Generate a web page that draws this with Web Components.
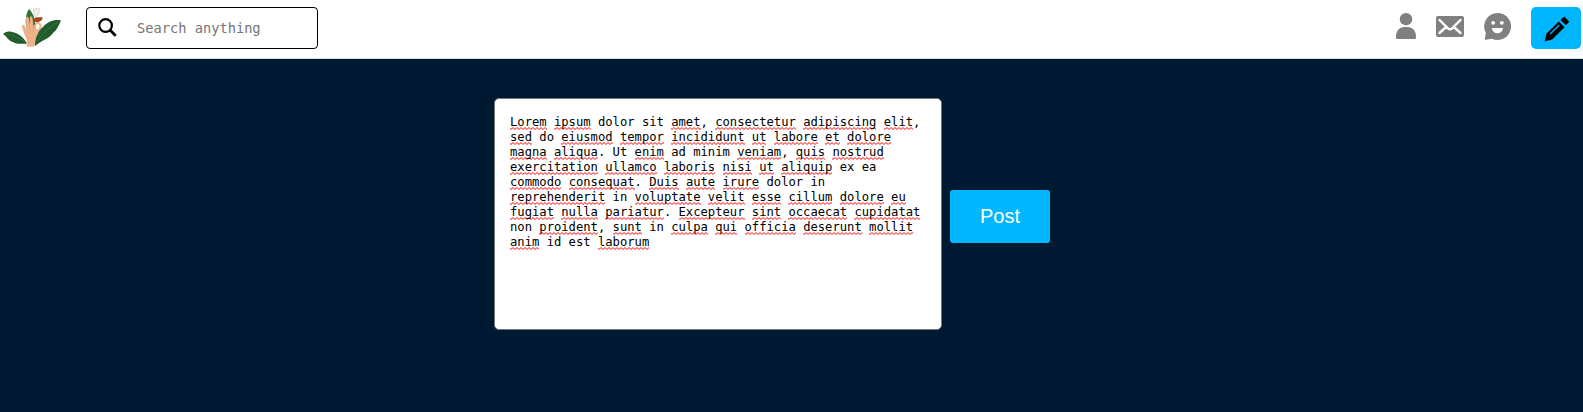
<!DOCTYPE html>
<html lang="en"><head><meta charset="utf-8"><title>Home</title>
<style>html,body{margin:0;height:100%;background:#001933}</style></head><body>
<app-page></app-page>
<script>
const define=(name,html)=>customElements.define(name,class extends HTMLElement{
  constructor(){super();this.attachShadow({mode:'open'}).innerHTML=html;}
});

define('site-logo',`<style>:host{display:block;width:61px;height:40px}svg{display:block}</style>
<svg width="61" height="40" viewBox="3 8 61 40">
<path d="M27 44 C24 37 18 33 12 32 C8 31 5 32 3 34 C7 36 8 41 13 42 C18 45 23 43 27 44Z" fill="#235c2c"/>
<path d="M35 46 C34 36 38 30 43 27 C48 21 55 19 61 20.500 C59 25 57 30 53 33 C49 39 42 40 35 46Z" fill="#235c2c"/>
<path d="M26 26 C25 17 27 12 29 9 C34 14 36 21 35.500 31 L28 30Z" fill="#34703a"/>
<path d="M6 34 C13 35 19 38 26 42 M36 43 C42 34 50 26 59 22" fill="none" stroke="#3b7a42" stroke-width=".7"/>
<path d="M33 9 L35 8 36 10 37 8 40 9 38.500 15 35 17Z" fill="#f4eeee" stroke="#d3c6c6" stroke-width=".6"/>
<path d="M34 18.500 C37 16 39 18 42.500 17 C43 20 40 22 37 22.500 L34 21Z" fill="#a5461e"/>
<path d="M27 46.800 L26.500 39 C24.500 35 23.500 31 21.800 26.500 Q21.800 24.200 24 25 L26.300 28.500 26 18 Q27.300 15.500 28.700 18 L29.500 25 30 17 Q31.700 15 32.500 18 L33.500 26 36 30 36 38 34.500 46.500Z" fill="#eeb288"/>
<ellipse cx="37.600" cy="26.800" rx="2.900" ry="3.800" fill="none" stroke="#eeb288" stroke-width="2" transform="rotate(20 37.600 26.800)"/>
<path d="M34 29 Q37 33 40 29 L36 38 33 36Z" fill="#eeb288"/>
<path d="M29.500 26 L30.200 31 M33 27 L33 31" stroke="#d59a72" stroke-width=".6"/>
</svg>`);

define('search-box',`<style>:host{display:flex;align-items:center;box-sizing:border-box;width:232px;height:42px;border:1px solid #000;border-radius:4px;background:#fff;padding-left:11px}
svg{flex:none;margin-top:-2px}span{margin-left:20px;color:#757575;font:13.7px/20px "DejaVu Sans Mono",monospace;white-space:pre}</style>
<svg width="19" height="19" viewBox="0 0 19 19" fill="none" stroke="#000"><circle cx="7.600" cy="7.500" r="6.300" stroke-width="2.200"/><path d="M12 12l5.700 5.700" stroke-width="2.800"/></svg>
<span><slot></slot></span>`);

define('nav-icons',`<style>:host{display:flex;align-items:center;gap:20px;height:28px;color:#808080}svg{display:block;fill:currentColor}</style>
<svg width="20" height="26" viewBox="0 0 20 26"><circle cx="10" cy="6.200" r="6.200"/><path d="M0 25v-1.500C0 17.500 4 14 8 14h4c4 0 8 3.500 8 9.500V25q0 1-1 1H1q-1 0-1-1z"/></svg>
<svg width="28" height="21" viewBox="0 0 28 21"><rect width="28" height="21" rx="2"/><path d="M3.500 4l8.500 8.300q2 1.900 4 0L24.500 4M3.500 17l5.500-5M24.500 17l-5.500-5" fill="none" stroke="#fff" stroke-width="2.400" stroke-linecap="round"/></svg>
<svg width="27" height="27" viewBox="0 0 27 27"><path d="M13.500 0A13.500 13.500 0 1 1 8 25.800L1.500 26.700Q.800 26.700 .900 26L1.800 20A13.500 13.500 0 0 1 13.500 0Z"/><g fill="#fff"><circle cx="9.200" cy="9.800" r="1.900"/><circle cx="17.800" cy="9.800" r="1.900"/><path d="M8 15h11a5.500 5.300 0 0 1-11 0Z"/></g></svg>`);

define('compose-button',`<style>:host{display:flex;align-items:center;justify-content:center;width:50px;height:42px;border-radius:5px;background:#00b7ff}svg{margin:1px 0 0 1px}</style>
<svg width="26" height="26" viewBox="0 0 26 26"><path d="M20.300 .5l5 5.200-3.700 3.600-5.200-5.200z"/><path fill-rule="evenodd" d="M14.800 5.500l5.700 5.700L8.200 23.500 .6 25.400 2.400 17.800Z M5.800 17.600l.9.9 9-9-.9-.9Z"/></svg>`);

define('top-bar',`<style>:host{display:flex;box-sizing:border-box;height:59px;background:#fff;border-bottom:1px solid #dcdcdc;padding:7px 2px 0 3px}
site-logo{margin-top:1px}search-box{margin-left:22px}nav-icons{margin:5px 20px 0 auto}</style>
<site-logo></site-logo><search-box>Search anything</search-box><nav-icons></nav-icons><compose-button></compose-button>`);

define('spell-mark',`<style>:host{display:inline;padding-bottom:1px;background:url("data:image/svg+xml,%3Csvg xmlns='http://www.w3.org/2000/svg' width='4' height='3'%3E%3Cpath d='M-1 .5L1 2.5 3 .5 5 2.5' fill='none' stroke='%23f00' stroke-width='1'/%3E%3C/svg%3E") 0 100% / 4px 3px repeat-x}</style><slot></slot>`);

define('post-editor',`<style>:host{display:block;box-sizing:border-box;width:448px;height:232px;border:1px solid #767676;border-radius:5px;background:#fff;padding:16px 15px 14px;color:#000;font:12.18px/15px "DejaVu Sans Mono",monospace;white-space:pre}</style><div></div>`);

define('post-button',`<style>:host{display:flex;align-items:center;justify-content:center;box-sizing:border-box;width:100px;height:53px;padding-bottom:2px;border-radius:3px;background:#00b7ff;color:#fff;font:20px/24px "Liberation Sans",Arial,sans-serif}</style><slot></slot>`);

define('app-page',`<style>:host{display:block}main{display:flex;padding:39px 0 0 494px}post-button{margin:92px 0 0 8px}</style>
<top-bar></top-bar><main><post-editor></post-editor><post-button>Post</post-button></main>`);

const lines=['Lorem ipsum dolor sit amet, consectetur adipiscing elit,','sed do eiusmod tempor incididunt ut labore et dolore','magna aliqua. Ut enim ad minim veniam, quis nostrud','exercitation ullamco laboris nisi ut aliquip ex ea','commodo consequat. Duis aute irure dolor in','reprehenderit in voluptate velit esse cillum dolore eu','fugiat nulla pariatur. Excepteur sint occaecat cupidatat','non proident, sunt in culpa qui officia deserunt mollit','anim id est laborum'];
const plain=[['dolor','sit'],['do'],['Ut','ad','minim'],['ex','ea'],['dolor','in'],['in'],[],['non','in'],['id','est']];
const box=document.querySelector('app-page').shadowRoot.querySelector('post-editor').shadowRoot.querySelector('div');
box.innerHTML=lines.map((l,i)=>l.replace(/[A-Za-z]+/g,w=>plain[i].includes(w)?w:`<spell-mark>${w}</spell-mark>`)).join('\n');
</script></body></html>
